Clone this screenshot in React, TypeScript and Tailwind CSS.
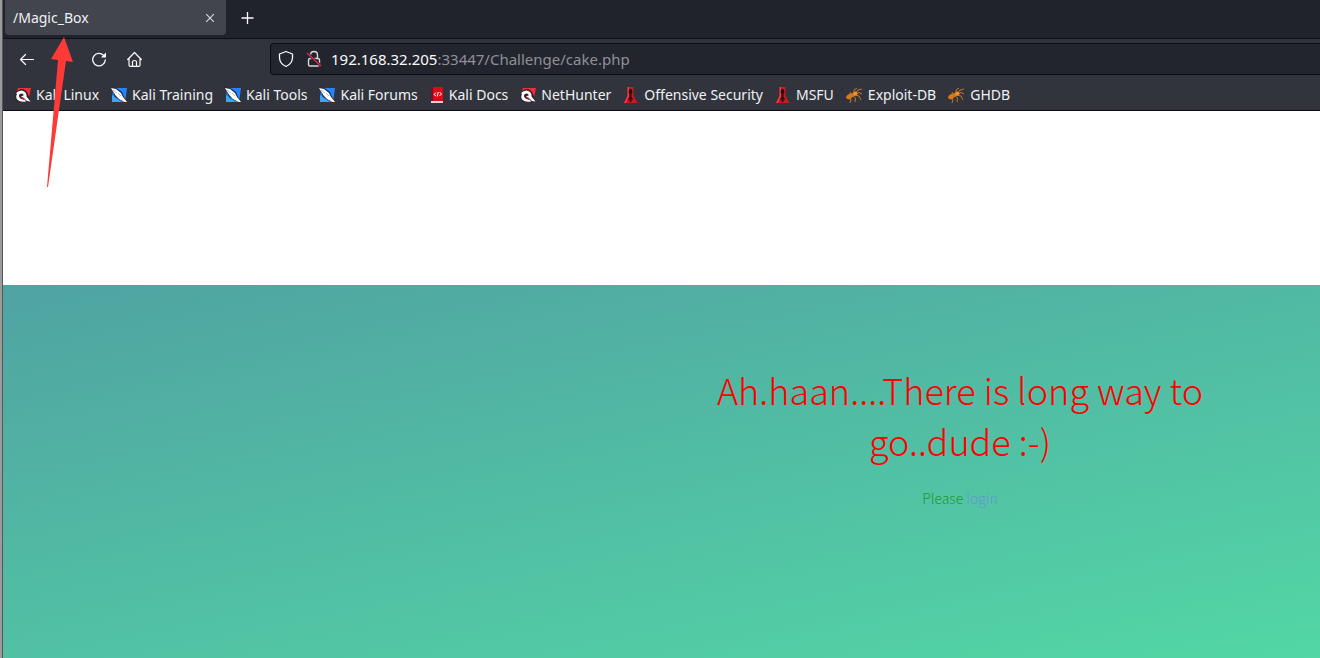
import type { ReactNode } from 'react';

function DragonIcon() {
  return (
    <svg width="16" height="16" viewBox="0 0 16 16" aria-hidden="true">
      <path d="M3 1H16L13.500 13L7 11L2 4Z" fill="#ee2f3a" />
      <path d="M2 4L6 2Q11 2 13 7L15 12L14 15H2L0 10V7Z" fill="#33202c" />
      <path d="M1 6Q6 1.500 10 5Q12.500 8 11 10.500L8.500 9Q9 6.500 6.500 6.500Q3.500 7 4 9.500Q5.500 13 10 12.500L11 14.500Q4 15.500 1.500 11.500Q.5 9 2 7Z" fill="#fff" />
      <path d="M6 9.500Q9 7.500 11.500 9.500L15.500 14.500L12 14Q9 10.500 6 9.500Z" fill="#fff" />
      <path d="M5.500 10Q8.500 9.500 9.500 12L11 13.500L8 12.500Z" fill="#d81b3c" />
    </svg>
  );
}

function KnifeIcon() {
  return (
    <svg width="16" height="16" viewBox="0 0 16 16" aria-hidden="true">
      <path d="M2 1H16L14 15H1Z" fill="#2684ff" />
      <path d="M1 8L10 15H1Z" fill="#35a7ff" />
      <path d="M0 0L6 1.500L11 5L13 10L16 15L9 13L4 10Z" fill="#17253f" />
      <path d="M0 1L5 2L10 6L12 10L16 15L14 15L8 12L5 9L3 6Z" fill="#fff" />
      <path d="M2 3L6 6M7 6L10 9" stroke="#7e9cc5" strokeWidth=".7" />
    </svg>
  );
}

function DocsIcon() {
  return (
    <svg width="14" height="16" viewBox="0 0 14 16" aria-hidden="true">
      <path d="M1 0H13V14H1Z" fill="#e30613" />
      <path d="M1 0H3V14H1Z" fill="#6d1232" />
      <path d="M1 14H13V16H1Z" fill="#ddd4d6" />
      <path d="M6 5.500L4 7.500L6 9M9.500 5L11.500 7L9.500 9M8.300 5L7.200 9.500" fill="none" stroke="#fff" strokeWidth="1" />
    </svg>
  );
}

function TowerIcon() {
  return (
    <svg width="16" height="16" viewBox="0 0 16 16" aria-hidden="true">
      <path d="M4.500 0H10.500V9L14.500 16H1L4.500 9Z" fill="#c81a20" />
      <path d="M4.500 0H6V9L3 16H1L4.500 9Z" fill="#ef3c3c" />
      <path d="M6.500 2H8.500L9.500 5L8.500 7V10L10.500 13L8.500 12V15H6.500V12L4.500 13L6.500 10V7L5.500 5Z" fill="#30080d" />
    </svg>
  );
}

function AntIcon() {
  return (
    <svg width="17" height="16" viewBox="0 0 17 16" aria-hidden="true">
      <path d="M0 10Q2 6 6 6.500Q9 4 11 6Q11 9 7 9.500L4 12.500L1 12Z" fill="#d9781b" />
      <g fill="none" stroke="#c97424" strokeWidth="1">
        <path d="M8 7V3L11 1M9 7L12 3L16 2M10 7L13 5.500L16 7M9 8L13 9L15 13M7 9L9.500 11L9 15M4 11L5 13L4 16M5 7L4 5" />
      </g>
      <circle cx="9.500" cy="6.500" r="2" fill="#f29321" />
    </svg>
  );
}

const bookmarks: { label: string; icon: ReactNode }[] = [
  { label: 'Kali Linux', icon: <DragonIcon /> },
  { label: 'Kali Training', icon: <KnifeIcon /> },
  { label: 'Kali Tools', icon: <KnifeIcon /> },
  { label: 'Kali Forums', icon: <KnifeIcon /> },
  { label: 'Kali Docs', icon: <DocsIcon /> },
  { label: 'NetHunter', icon: <DragonIcon /> },
  { label: 'Offensive Security', icon: <TowerIcon /> },
  { label: 'MSFU', icon: <TowerIcon /> },
  { label: 'Exploit-DB', icon: <AntIcon /> },
  { label: 'GHDB', icon: <AntIcon /> },
];

function TabStrip() {
  return (
    <div className="flex h-[39px] items-start border-b border-[#0f1015] bg-[#20232c] pl-0.5">
      <div className="flex h-[35px] w-[221px] items-center justify-between rounded-b bg-[#42454d] px-2 text-[14px]">
        <span>/Magic_Box</span>
        <button aria-label="Close tab" className="flex size-4 items-center justify-center">
          <svg width="10" height="10" viewBox="0 0 10 10" stroke="#dcdce0" strokeWidth="1.1">
            <path d="M1.200 1.200L8.800 8.800M8.800 1.200L1.200 8.800" />
          </svg>
        </button>
      </div>
      <button aria-label="New tab" className="ml-3 flex h-[35px] w-5 items-center justify-center">
        <svg width="14" height="14" viewBox="0 0 14 14" stroke="#fbfbfe" strokeWidth="1.3">
          <path d="M6.500 1V13M.5 7H12.500" />
        </svg>
      </button>
    </div>
  );
}

function Toolbar() {
  return (
    <div className="flex h-10 items-center bg-[#31343c] pl-4">
      <div className="flex w-[251px] shrink-0 items-center gap-5">
        <button aria-label="Back">
          <svg width="16" height="16" viewBox="0 0 16 16" fill="none" stroke="#fbfbfe" strokeWidth="1.2" strokeLinecap="round" strokeLinejoin="round">
            <path d="M14.500 8.500H1.500M6.500 3.500L1.500 8.500L6.500 13.500" />
          </svg>
        </button>
        <span className="w-4" />
        <button aria-label="Reload">
          <svg width="16" height="16" viewBox="0 0 16 16" fill="none" stroke="#fbfbfe" strokeWidth="1.3" strokeLinecap="round">
            <path d="M14.300 9A6.300 6.300 0 1 1 12.500 4.200L14 5.500" />
            <path d="M15 1.500V6.500H10Z" fill="#fbfbfe" stroke="none" />
          </svg>
        </button>
        <button aria-label="Home">
          <svg width="16" height="16" viewBox="0 0 16 16" fill="none" stroke="#fbfbfe" strokeWidth="1.2" strokeLinecap="round" strokeLinejoin="round">
            <path d="M.7 8.500L7.500 1.500L14.300 8.500M2 7.500V14Q2 15.300 3.500 15.300H11.500Q13 15.300 13 14V7.500" />
            <path d="M5.500 15V11Q5.500 9.500 7.500 9.500Q9.500 9.500 9.500 11V15" />
          </svg>
        </button>
      </div>
      <div className="flex h-8 grow items-center rounded-l border border-r-0 border-[#0c0d12] bg-[#23252e] pl-[7px]">
        <svg width="16" height="18" viewBox="0 0 16 18" fill="none" stroke="#fbfbfe" strokeWidth="1.3" strokeLinejoin="round" aria-hidden="true">
          <path d="M8 1.500L14.500 4V8Q14 14 8 16.500Q2 14 1.500 8V4Z" />
        </svg>
        <svg className="ml-3" width="16" height="18" viewBox="0 0 16 18" fill="none" stroke="#d7d7dc" strokeWidth="1.4" aria-hidden="true">
          <path d="M4.500 8V5Q4.500 1.500 8 1.500Q11.500 1.500 11.500 5V8M4 8.500H12Q13.500 8.500 13.500 10V14.500Q13.500 16 12 16H4Q2.500 16 2.500 14.500V10Q2.500 8.500 4 8.500" />
          <path d="M1 3L15 16" stroke="#23252e" strokeWidth="3" />
          <path d="M1 3L15 16" stroke="#e22850" strokeWidth="1.5" />
        </svg>
        <a href="#address" className="ml-[9px] whitespace-nowrap text-[#8f9097]">
          <span className="text-[#fbfbfe]">192.168.32.205</span>:33447/Challenge/cake.php
        </a>
      </div>
    </div>
  );
}

function BookmarkBar() {
  return (
    <nav className="flex h-8 items-center gap-3 border-b border-[#0c0d12] bg-[#31343c] pl-3 text-[14px] whitespace-nowrap">
      {bookmarks.map(({ label, icon }) => (
        <a key={label} href="#bookmark" className="flex shrink-0 items-center gap-[5px]">
          {icon}
          {label}
        </a>
      ))}
    </nav>
  );
}

function Arrow() {
  return (
    <svg className="pointer-events-none absolute top-[37px] left-11" width="30" height="152" viewBox="0 0 30 152" aria-hidden="true">
      <path d="M18 0L27 25L20 24L2 150L1 150L12 23L5 22Z" fill="#fc3a38" />
    </svg>
  );
}

export default function App() {
  return (
    <div className="relative flex min-h-screen flex-col overflow-hidden border-l-2 border-[#9b9b9b] bg-white">
      <div className="flex grow flex-col border-l border-[#55575b]">
        <header className="font-['Noto_Sans',sans-serif] text-[15px] leading-5 text-[#f0f0f4]">
          <TabStrip />
          <Toolbar />
          <BookmarkBar />
        </header>
        <main className="flex grow flex-col pt-[174px] font-['Noto_Sans_CJK_SC',sans-serif] font-light">
          <section className="flex grow flex-col bg-[linear-gradient(to_bottom_right,#50a3a2,#53e3a6)] bg-[length:1914px_400px] pt-[79px] pr-[60px]">
            <div className="ml-auto w-[600px] text-center">
              <h1 className="text-[36px] leading-[51px] text-[#ff0000]">
                Ah.haan....There is long way to<br />go..dude :-)
              </h1>
              <p className="mt-5 text-[14px] leading-6 text-[#1e9a30]">
                Please <a href="#login" className="text-[#6495d8]">login</a>
              </p>
            </div>
          </section>
        </main>
      </div>
      <Arrow />
    </div>
  );
}
